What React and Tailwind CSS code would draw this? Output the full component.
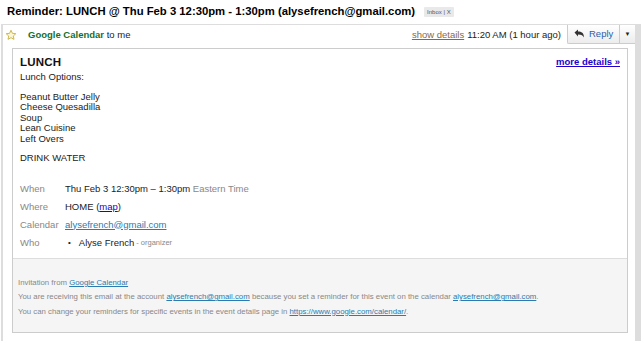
import React from "react";

const Star = () => (
  <svg width="12" height="12" viewBox="0 0 24 24">
    <path
      d="M12 2.5l2.9 6.2 6.7.7-5 4.6 1.4 6.7L12 17.3l-6 3.4 1.4-6.7-5-4.6 6.7-.7z"
      fill="#fbf6d6"
      stroke="#c9b13a"
      strokeWidth="1.8"
      strokeLinejoin="round"
    />
  </svg>
);

const ReplyArrow = () => (
  <svg width="11" height="10" viewBox="0 0 22 20">
    <path d="M1 7l7-6v4c7 0 12 3 12 12-2-4-5-6-12-6v4z" fill="#333" />
  </svg>
);

const link = "underline text-[#2a7bb0]";

export default function App() {
  return (
    <div
      className="w-[641px] h-[341px] overflow-hidden bg-white text-[#222]"
      style={{ fontFamily: '"Liberation Sans", Arial, sans-serif' }}
    >
      {/* subject line */}
      <div className="h-[24px] flex items-center pl-[7px] gap-[9px]">
        <h1 className="text-[11.3px] font-bold text-black leading-none">
          Reminder: LUNCH @ Thu Feb 3 12:30pm - 1:30pm (alysefrench@gmail.com)
        </h1>
        <span className="bg-[#e9e9e9] text-[#555] text-[6px] leading-[10px] px-[3px] rounded-[1px]">
          Inbox | X
        </span>
      </div>

      {/* message panel */}
      <div className="ml-[1px] border-l-2 border-t border-r-[6px] border-[#dddddd] h-[400px]">
        <div className="h-[22px] flex items-start">
          <div className="flex items-center h-[20px] pl-[2px] gap-[11px] text-[9.5px]">
            <Star />
            <span>
              <span className="font-bold text-[#14702b]">Google Calendar</span>{" "}
              <span className="text-[#222]">to me</span>
            </span>
          </div>
          <div className="ml-auto flex items-start text-[9.5px]">
            <div className="h-[20px] flex items-center gap-[3px] mr-[6px]">
              <span className="underline text-[#8a6a3c]">show details</span>
              <span>11:20 AM (1 hour ago)</span>
            </div>
            <div className="flex h-[19px] border-l border-b border-[#cccccc] rounded-bl-[2px] bg-gradient-to-b from-white to-[#ececec]">
              <div className="flex items-center gap-[4px] w-[52px] pl-[6px] border-r border-[#cccccc]">
                <ReplyArrow />
                <span className="text-[#2a5db0]">Reply</span>
              </div>
              <div className="w-[15px] flex items-center justify-center text-[6px] text-[#222]">
                ▼
              </div>
            </div>
          </div>
        </div>

        {/* invitation card */}
        <div className="ml-[9px] mr-[7px] mt-[1px] border border-[#cccccc]">
          <div className="px-[7px] pt-[6px] pb-[10px] text-[9.5px] leading-[10.5px]">
            <div className="flex items-center justify-between h-[14px]">
              <span className="text-[11.5px] font-bold text-[#111] tracking-[0.2px]">LUNCH</span>
              <span className="font-bold text-[#2200cc] underline">more details »</span>
            </div>
            <div className="mt-[3px]">Lunch Options:</div>
            <div className="mt-[9px]">
              <div>Peanut Butter Jelly</div>
              <div>Cheese Quesadilla</div>
              <div>Soup</div>
              <div>Lean Cuisine</div>
              <div>Left Overs</div>
            </div>
            <div className="mt-[9px]">DRINK WATER</div>

            <div className="mt-[20px] grid grid-cols-[45px_1fr] gap-y-[7.5px]">
              <span className="text-[#888]">When</span>
              <span>
                Thu Feb 3 12:30pm – 1:30pm <span className="text-[#888]">Eastern Time</span>
              </span>
              <span className="text-[#888]">Where</span>
              <span>
                HOME (<span className="underline text-[#2200cc]">map</span>)
              </span>
              <span className="text-[#888]">Calendar</span>
              <span className={link}>alysefrench@gmail.com</span>
              <span className="text-[#888]">Who</span>
              <span className="flex items-center">
                <span className="ml-[3px] mr-[8px] text-[8px]">•</span>
                <span>Alyse French</span>
                <span className="text-[#888] text-[7.5px] ml-[2px]">- organizer</span>
              </span>
            </div>
          </div>

          {/* footer */}
          <div className="border-t border-[#dddddd] bg-[#f5f5f5] pl-[5px] pt-[19.5px] pb-[16.5px] text-[7.8px] leading-[8px] text-[#888]">
            <div>
              Invitation from <span className={link}>Google Calendar</span>
            </div>
            <div className="mt-[6.6px]">
              You are receiving this email at the account{" "}
              <span className={link}>alysefrench@gmail.com</span> because you set a reminder for this event on the calendar{" "}
              <span className={link}>alysefrench@gmail.com</span>.
            </div>
            <div className="mt-[6.6px]">
              You can change your reminders for specific events in the event details page in{" "}
              <span className={link}>https://www.google.com/calendar/</span>.
            </div>
          </div>
        </div>
      </div>
    </div>
  );
}
